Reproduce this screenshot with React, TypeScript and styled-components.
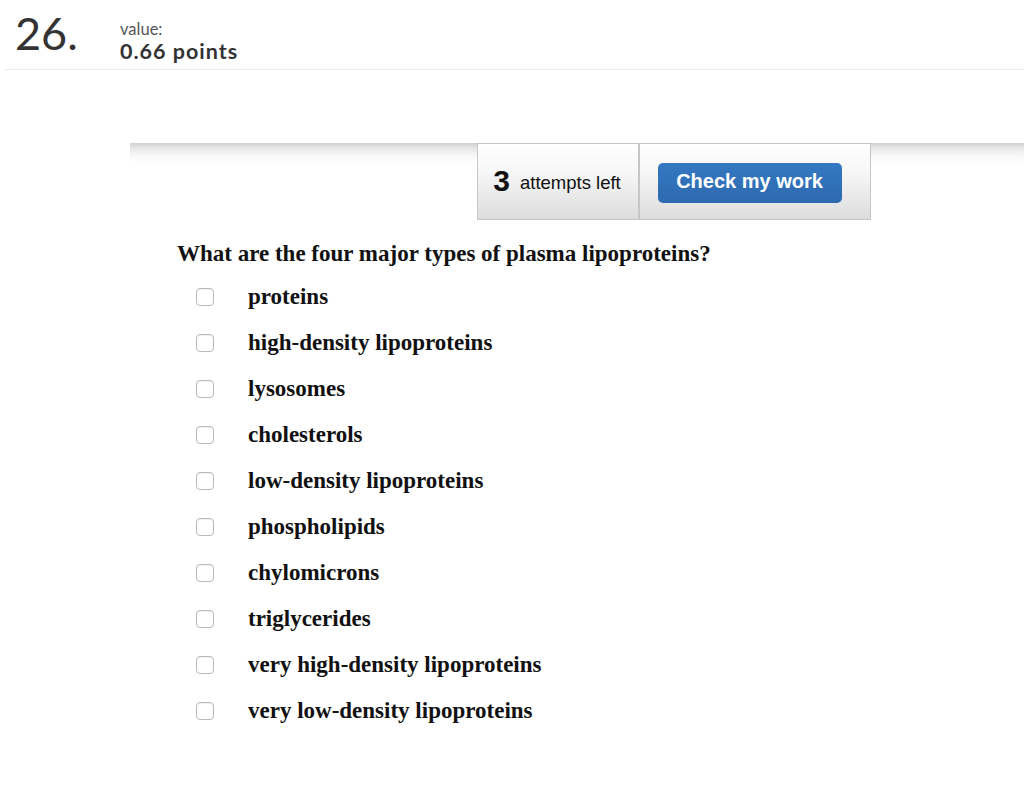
import React from "react";
import styled, { createGlobalStyle } from "styled-components";

const Global = createGlobalStyle`
  html, body { margin: 0; padding: 0; background: #fff; }
  body { font-family: "Liberation Sans", Arial, sans-serif; }
`;

const Page = styled.div`
  width: 1024px;
  min-height: 812px;
  background: #fff;
`;

const Header = styled.header`
  display: flex;
  align-items: flex-start;
  margin-left: 4px;
  border-bottom: 1px solid #ebebeb;
  box-sizing: border-box;
  height: 70px;
`;

const Number = styled.div`
  font-family: "Lato", "Open Sans", sans-serif;
  font-size: 45px;
  color: #333;
  line-height: 1;
  padding: 11px 0 0 11px;
  width: 116px;
  box-sizing: border-box;
`;

const Value = styled.div`
  display: flex;
  flex-direction: column;
  padding-top: 20px;
  font-family: "Lato", "Open Sans", sans-serif;
  color: #333;
`;

const ValueLabel = styled.span`
  font-size: 16.5px;
  color: #555;
  line-height: 19px;
`;

const Points = styled.span`
  font-size: 21.5px;
  font-weight: 700;
  letter-spacing: 1px;
  line-height: 25px;
`;

const BarArea = styled.div`
  margin-top: 73px;
  margin-left: 130px;
  display: flex;
  background: linear-gradient(to bottom, #cfcfcf 0px, #e6e6e6 5px, #f7f7f7 12px, #fff 20px);
  height: 77px;
`;

const Toolbar = styled.div`
  margin-left: 347px;
  display: flex;
  border: 1px solid #c6c6c6;
  box-sizing: border-box;
  height: 77px;
`;

const Cell = styled.div<{ $w: number; $first?: boolean }>`
  width: ${(p) => p.$w}px;
  box-sizing: border-box;
  display: flex;
  align-items: center;
  justify-content: center;
  background: linear-gradient(to bottom, #ffffff 0%, #f6f6f6 40%, #dcdcdc 100%);
  border-right: ${(p) => (p.$first ? "2px solid #c6c6c6" : "none")};
`;

const Attempts = styled.div`
  display: flex;
  align-items: baseline;
  gap: 10px;
  font-family: "Liberation Sans", Arial, sans-serif;
  color: #111;
  margin-left: -2px;
  padding-bottom: 2px;
`;

const Big = styled.span`
  font-size: 30px;
  font-weight: 700;
`;

const Small = styled.span`
  font-size: 18.5px;
  position: relative;
  top: -2px;
`;

const CheckButton = styled.button`
  width: 184px;
  height: 40px;
  border: none;
  border-radius: 5px;
  background: linear-gradient(to bottom, #3479c2, #2d69ae);
  color: #fff;
  font-family: "Liberation Sans", Arial, sans-serif;
  font-weight: 700;
  font-size: 20px;
  padding: 0 0 3px;
  cursor: pointer;
  margin-left: -11px;
  margin-top: 3px;
`;

const Question = styled.div`
  margin: 21px 0 0 177px;
  font-family: "Liberation Serif", "Times New Roman", serif;
  font-weight: 700;
  font-size: 23px;
  color: #111;
  line-height: 26px;
`;

const Options = styled.ul`
  list-style: none;
  margin: 17px 0 0 196px;
  padding: 0;
  display: flex;
  flex-direction: column;
  gap: 20px;
`;

const Option = styled.li`
  display: flex;
  align-items: center;
  height: 26px;
`;

const Box = styled.span`
  width: 16px;
  height: 16px;
  border: 1px solid #b9b9b9;
  border-radius: 4px;
  box-shadow: inset 0 1px 1px rgba(0, 0, 0, 0.06);
  background: #fff;
  flex: none;
  margin-right: 34px;
`;

const Label = styled.span`
  font-family: "Liberation Serif", "Times New Roman", serif;
  font-weight: 700;
  font-size: 23px;
  color: #111;
`;

const items = [
  "proteins",
  "high-density lipoproteins",
  "lysosomes",
  "cholesterols",
  "low-density lipoproteins",
  "phospholipids",
  "chylomicrons",
  "triglycerides",
  "very high-density lipoproteins",
  "very low-density lipoproteins",
];

export default function App() {
  return (
    <Page>
      <Global />
      <Header>
        <Number>26.</Number>
        <Value>
          <ValueLabel>value:</ValueLabel>
          <Points>0.66 points</Points>
        </Value>
      </Header>
      <BarArea>
        <Toolbar>
          <Cell $w={162} $first>
            <Attempts>
              <Big>3</Big>
              <Small>attempts left</Small>
            </Attempts>
          </Cell>
          <Cell $w={230}>
            <CheckButton>Check my work</CheckButton>
          </Cell>
        </Toolbar>
      </BarArea>
      <Question>What are the four major types of plasma lipoproteins?</Question>
      <Options>
        {items.map((t) => (
          <Option key={t}>
            <Box />
            <Label>{t}</Label>
          </Option>
        ))}
      </Options>
    </Page>
  );
}
